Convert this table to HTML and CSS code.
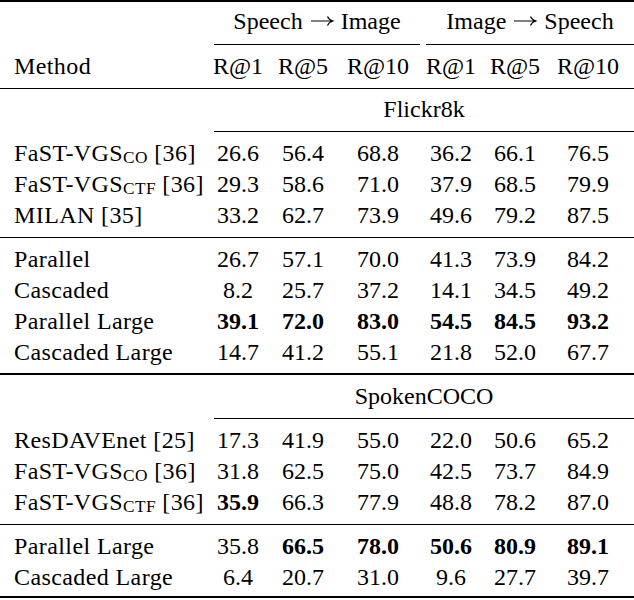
FILE: index.html
```html
<!DOCTYPE html>
<html>
<head>
<meta charset="utf-8">
<link rel="stylesheet" href="styles.css">
</head>
<body>
<div class="tbl">
  <div class="rule thick top"></div>

  <div class="c m"></div>
  <div class="grp g1">Speech <svg class="arr" viewBox="0 0 24 12" width="24" height="12"><path d="M1 6H22.5M17.5 1.5Q18.8 4.8 23 6Q18.8 7.2 17.5 10.5"/></svg> Image</div>
  <div class="grp g2">Image <svg class="arr" viewBox="0 0 24 12" width="24" height="12"><path d="M1 6H22.5M17.5 1.5Q18.8 4.8 23 6Q18.8 7.2 17.5 10.5"/></svg> Speech</div>
  <div class="cmid g1"></div>
  <div class="cmid g2"></div>

  <div class="c m">Method</div>
  <div class="c">R@1</div><div class="c">R@5</div><div class="c">R@10</div>
  <div class="c">R@1</div><div class="c">R@5</div><div class="c last">R@10</div>
  <div class="rule head"></div>

  <div class="c m"></div>
  <div class="ds">Flickr8k</div>
  <div class="cmid all"></div>

  <div class="c m">FaST-VGS<sub>CO</sub> [36]</div>
  <div class="c">26.6</div><div class="c">56.4</div><div class="c">68.8</div>
  <div class="c">36.2</div><div class="c">66.1</div><div class="c last">76.5</div>
  <div class="c m">FaST-VGS<sub>CTF</sub> [36]</div>
  <div class="c">29.3</div><div class="c">58.6</div><div class="c">71.0</div>
  <div class="c">37.9</div><div class="c">68.5</div><div class="c last">79.9</div>
  <div class="c m">MILAN [35]</div>
  <div class="c">33.2</div><div class="c">62.7</div><div class="c">73.9</div>
  <div class="c">49.6</div><div class="c">79.2</div><div class="c last">87.5</div>
  <div class="rule"></div>

  <div class="c m">Parallel</div>
  <div class="c">26.7</div><div class="c">57.1</div><div class="c">70.0</div>
  <div class="c">41.3</div><div class="c">73.9</div><div class="c last">84.2</div>
  <div class="c m">Cascaded</div>
  <div class="c">8.2</div><div class="c">25.7</div><div class="c">37.2</div>
  <div class="c">14.1</div><div class="c">34.5</div><div class="c last">49.2</div>
  <div class="c m">Parallel Large</div>
  <div class="c b">39.1</div><div class="c b">72.0</div><div class="c b">83.0</div>
  <div class="c b">54.5</div><div class="c b">84.5</div><div class="c b last">93.2</div>
  <div class="c m">Cascaded Large</div>
  <div class="c">14.7</div><div class="c">41.2</div><div class="c">55.1</div>
  <div class="c">21.8</div><div class="c">52.0</div><div class="c last">67.7</div>
  <div class="rule mid2"></div>

  <div class="c m"></div>
  <div class="ds">SpokenCOCO</div>
  <div class="cmid all"></div>

  <div class="c m">ResDAVEnet [25]</div>
  <div class="c">17.3</div><div class="c">41.9</div><div class="c">55.0</div>
  <div class="c">22.0</div><div class="c">50.6</div><div class="c last">65.2</div>
  <div class="c m">FaST-VGS<sub>CO</sub> [36]</div>
  <div class="c">31.8</div><div class="c">62.5</div><div class="c">75.0</div>
  <div class="c">42.5</div><div class="c">73.7</div><div class="c last">84.9</div>
  <div class="c m">FaST-VGS<sub>CTF</sub> [36]</div>
  <div class="c b">35.9</div><div class="c">66.3</div><div class="c">77.9</div>
  <div class="c">48.8</div><div class="c">78.2</div><div class="c last">87.0</div>
  <div class="rule"></div>

  <div class="c m">Parallel Large</div>
  <div class="c">35.8</div><div class="c b">66.5</div><div class="c b">78.0</div>
  <div class="c b">50.6</div><div class="c b">80.9</div><div class="c b last">89.1</div>
  <div class="c m">Cascaded Large</div>
  <div class="c">6.4</div><div class="c">20.7</div><div class="c">31.0</div>
  <div class="c">9.6</div><div class="c">27.7</div><div class="c last">39.7</div>
  <div class="rule thick bottom"></div>
</div>
</body>
</html>
```

FILE: styles.css
```css
html, body {
  margin: 0;
  padding: 0;
  background: #fff;
}
.tbl {
  width: 634px;
  display: grid;
  grid-template-columns: 206px 64px 66px 84px 62px 66px 86px;
  font-family: "Liberation Serif", "Times New Roman", serif;
  font-size: 24px;
  color: #000;
}
.c, .grp, .ds {
  height: 31px;
  line-height: 31px;
  white-space: nowrap;
}
.c {
  text-align: center;
}
.c.last {
  padding-right: 6px;
}
.c.m {
  text-align: left;
  padding-left: 14px;
  letter-spacing: 0.4px;
}
.b {
  font-weight: bold;
}
sub {
  font-size: 0.72em;
  vertical-align: -0.14em;
  line-height: 0;
}
.arr {
  display: inline-block;
  vertical-align: 0.1em;
  margin: 0 1px;
}
.arr path {
  fill: none;
  stroke: #000;
  stroke-width: 1.1;
}
.grp {
  text-align: center;
}
.grp.g1 {
  grid-column: 2 / 5;
  padding-left: 8px;
}
.grp.g2 {
  grid-column: 5 / 8;
  padding-left: 6px;
}
.ds {
  grid-column: 2 / 8;
  padding-left: 8px;
  text-align: center;
}
.rule {
  grid-column: 1 / -1;
  height: 1px;
  background: #000;
  margin: 6px 0;
}
.rule.head {
  margin: 6px 0 5px;
}
.rule.mid2 {
  height: 2px;
  margin: 5px 0 6px;
}
.rule.top {
  height: 2px;
  margin: 0 0 4px;
}
.rule.bottom {
  height: 2px;
  margin: 3px 0 0;
}
.cmid {
  height: 1px;
  background: #000;
  margin: 6px 0;
}
.cmid.g1,
.cmid.g2 {
  margin-top: 7px;
}
.cmid.g1 {
  grid-column: 2 / 5;
  margin-left: 8px;
}
.cmid.g2 {
  grid-column: 5 / 8;
  margin-left: 6px;
}
.cmid.all {
  grid-column: 2 / 8;
  margin-left: 8px;
}
```
